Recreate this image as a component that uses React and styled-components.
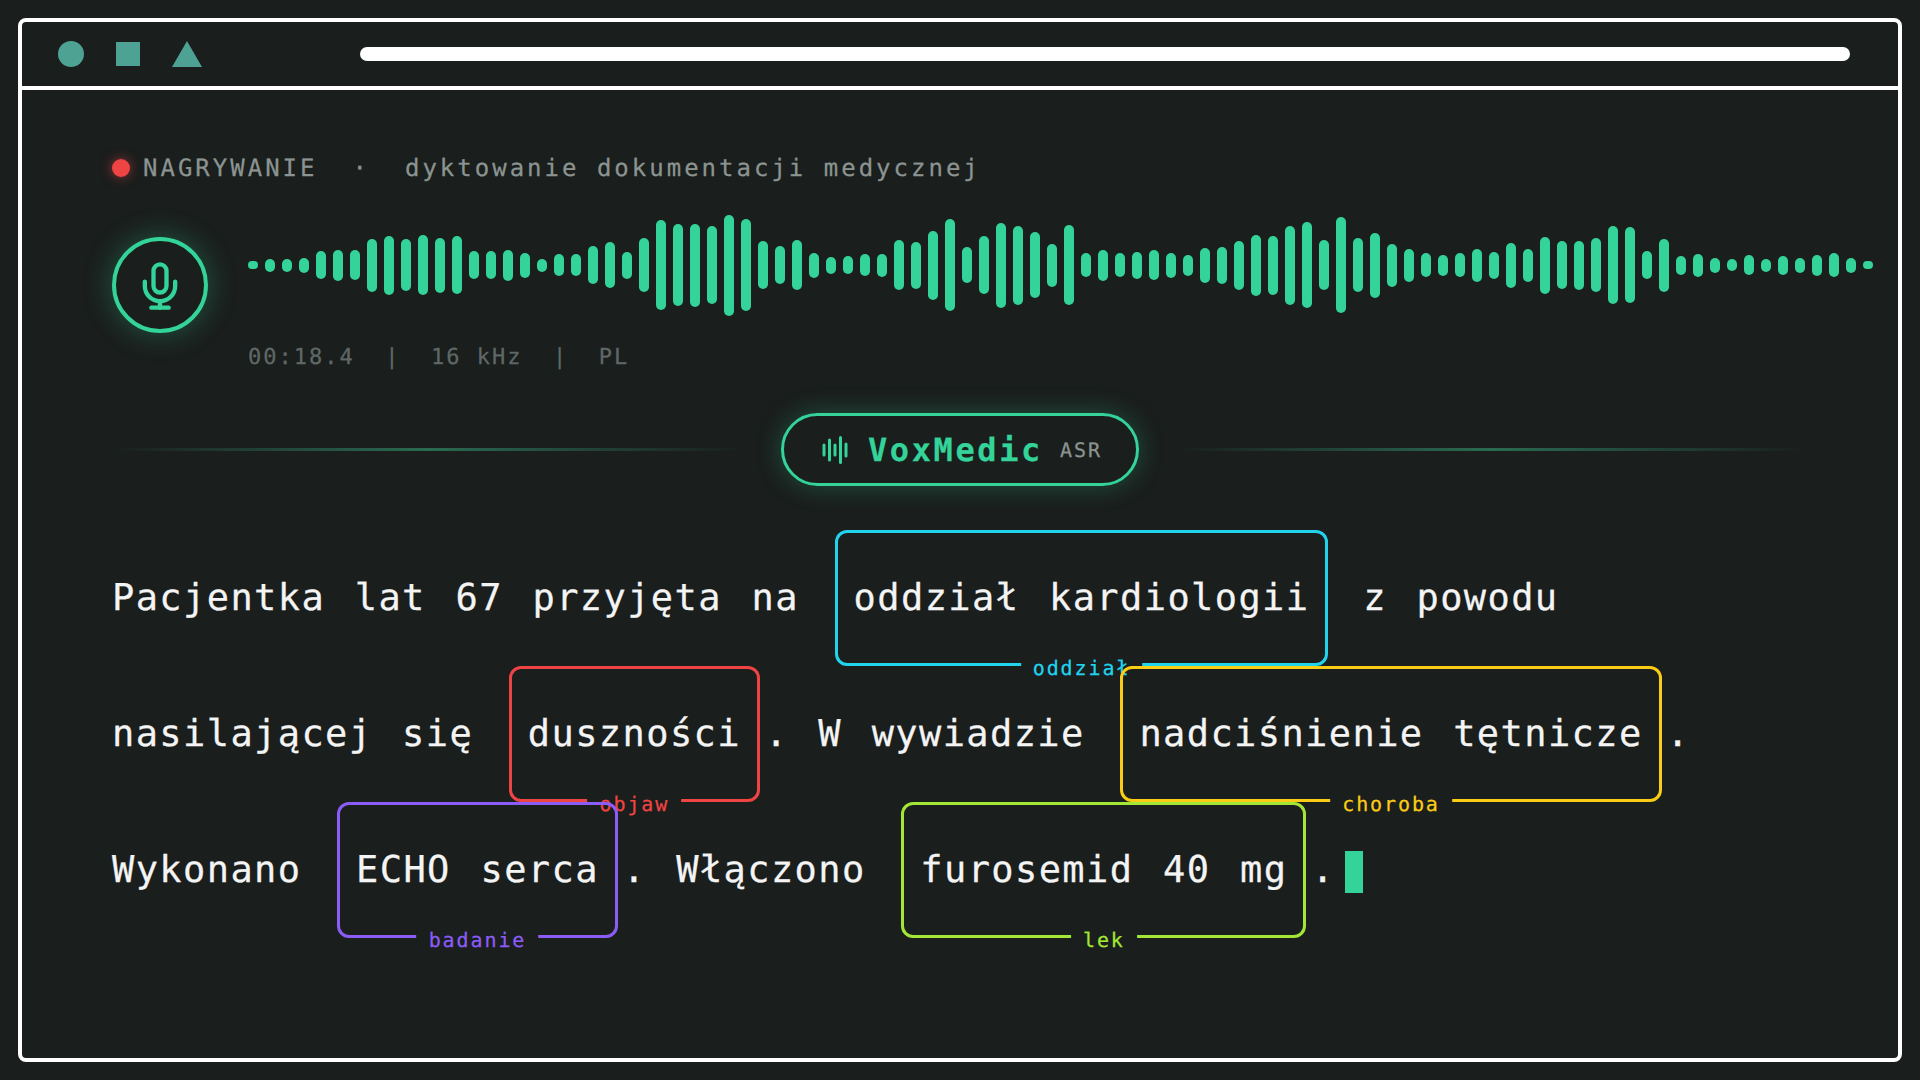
import styled, { createGlobalStyle } from "styled-components";

const GREEN = "#34d399";
const BG = "#1a1e1d";
const TEAL = "#4ea294";

const GlobalStyle = createGlobalStyle`
  html, body {
    margin: 0;
    background: ${BG};
  }
  * {
    box-sizing: border-box;
  }
`;

const Page = styled.div`
  width: 1920px;
  height: 1080px;
  padding: 18px;
  background: ${BG};
  font-family: "DejaVu Sans Mono", monospace;
  text-rendering: geometricPrecision;
  -webkit-text-stroke: 0.25px currentColor;
`;

const Frame = styled.div`
  height: 100%;
  border: 4px solid #fff;
  border-radius: 8px;
  overflow: hidden;
`;

const TitleBar = styled.div`
  height: 68px;
  border-bottom: 4px solid #fff;
  padding: 0 48px 0 36px;
  display: flex;
  align-items: center;
  gap: 32px;
`;

const Circle = styled.div`
  width: 26px;
  height: 26px;
  border-radius: 50%;
  background: ${TEAL};
`;

const Square = styled.div`
  width: 24px;
  height: 24px;
  background: ${TEAL};
`;

const Triangle = styled.div`
  width: 30px;
  height: 26px;
  background: ${TEAL};
  clip-path: polygon(50% 0, 100% 100%, 0 100%);
`;

const AddressBar = styled.div`
  flex: 1;
  height: 14px;
  margin-left: 126px;
  border-radius: 7px;
  background: #fff;
`;

const Main = styled.div`
  padding: 64px 25px 0 90px;
`;

const Status = styled.div`
  height: 28px;
  display: flex;
  align-items: center;
  gap: 35px;
  font-size: 24px;
  letter-spacing: 3px;
  color: #8b9491;
  white-space: pre;
`;

const Rec = styled.div`
  display: flex;
  align-items: center;
  gap: 13px;
`;

const RecDot = styled.div`
  width: 18px;
  height: 18px;
  border-radius: 50%;
  background: #ef4444;
  box-shadow: 0 0 12px rgba(239, 68, 68, 0.6);
`;

const Recorder = styled.div`
  margin-top: 33px;
  display: flex;
  align-items: flex-start;
  gap: 40px;
`;

const MicButton = styled.div`
  flex: none;
  width: 96px;
  height: 96px;
  margin-top: 22px;
  border: 4px solid ${GREEN};
  border-radius: 50%;
  display: flex;
  align-items: center;
  justify-content: center;
  box-shadow: 0 0 30px rgba(52, 211, 153, 0.32);
  svg {
    display: block;
    margin-top: 1px;
  }
`;

const Track = styled.div`
  flex: 1;
`;

const Wave = styled.div`
  height: 100px;
  display: flex;
  align-items: center;
  gap: 7px;
`;

const Bar = styled.div`
  flex: none;
  width: 10px;
  border-radius: 5px;
  background: ${GREEN};
`;

const Meta = styled.div`
  margin-top: 29px;
  height: 26px;
  display: flex;
  align-items: center;
  gap: 30.5px;
  font-size: 22px;
  letter-spacing: 2px;
  color: #5f6866;
`;

const BrandRow = styled.div`
  margin: 43px 0 44px 0;
  width: 1696px;
  display: flex;
  align-items: center;
  gap: 36px;
`;

const FadeLine = styled.div`
  flex: 1;
  height: 3px;
  background: linear-gradient(90deg, transparent, #2a6b52 50%, transparent);
`;

const Pill = styled.div`
  flex: none;
  width: 358px;
  height: 73px;
  border: 3px solid ${GREEN};
  border-radius: 37px;
  padding-left: 38px;
  display: flex;
  align-items: center;
  box-shadow: 0 0 26px rgba(52, 211, 153, 0.28);
`;

const BrandName = styled.span`
  margin-left: 20px;
  font-size: 32px;
  font-weight: bold;
  letter-spacing: 2.6px;
  color: ${GREEN};
`;

const BrandTag = styled.span`
  margin-left: 17px;
  font-size: 20px;
  letter-spacing: 2px;
  color: #8b9491;
`;

const Transcript = styled.div`
  font-size: 37px;
  letter-spacing: 1.4px;
  word-spacing: 6px;
  color: #f4f4f4;
`;

const Line = styled.div`
  height: 136px;
  padding-bottom: 2px;
  display: flex;
  align-items: center;
  white-space: pre;
`;

const Entity = styled.span`
  position: relative;
  align-self: flex-start;
  height: 136px;
  margin: 0 5px 0 6px;
  padding: 0 16px 2px;
  border: 3px solid ${(p) => p.$color};
  border-radius: 12px;
  display: flex;
  align-items: center;
`;

const EntityLabel = styled.span`
  position: absolute;
  left: 50%;
  bottom: -17px;
  transform: translateX(-50%);
  padding: 0 12px;
  background: ${BG};
  font-size: 20px;
  letter-spacing: 1.9px;
  word-spacing: 0;
  color: ${(p) => p.$color};
`;

const Cursor = styled.span`
  width: 18px;
  height: 42px;
  margin: 6px 0 0 10px;
  background: ${GREEN};
`;

const heights = [
  8, 13, 13, 15, 28, 31, 30, 53, 59, 52, 60, 55, 58, 28, 28, 31, 25, 13, 22, 22, 38, 46, 27, 54,
  90, 82, 83, 78, 101, 92, 48, 38, 50, 25, 17, 18, 22, 23, 50, 47, 69, 92, 36, 58, 85, 79, 66, 43,
  80, 24, 31, 24, 27, 30, 25, 21, 35, 37, 49, 61, 59, 79, 86, 50, 96, 54, 65, 43, 33, 24, 21, 24,
  33, 27, 45, 33, 57, 48, 49, 54, 78, 76, 28, 53, 19, 23, 15, 12, 20, 13, 19, 15, 21, 24, 15, 8,
];

const MicIcon = () => (
  <svg width="52" height="52" viewBox="0 0 24 24" fill="none" stroke={GREEN} strokeWidth="2" strokeLinecap="round">
    <rect x="9" y="2" width="6" height="13" rx="3" />
    <path d="M19 10v2a7 7 0 0 1-14 0v-2" />
    <path d="M12 19v3" />
    <path d="M8 22h8" />
  </svg>
);

const LogoIcon = () => (
  <svg width="26" height="28" viewBox="0 0 26 28" fill="none" stroke={GREEN} strokeWidth="3" strokeLinecap="round">
    <path d="M2 9v10" />
    <path d="M7.5 4v20" />
    <path d="M13 9v10" />
    <path d="M18.5 1.5v25" />
    <path d="M24 8v12" />
  </svg>
);

const Tag = ({ color, label, children }) => (
  <Entity $color={color}>
    {children}
    <EntityLabel $color={color}>{label}</EntityLabel>
  </Entity>
);

const App = () => {
  return (
    <Page>
      <GlobalStyle />
      <Frame>
        <TitleBar>
          <Circle />
          <Square />
          <Triangle />
          <AddressBar />
        </TitleBar>
        <Main>
          <Status>
            <Rec>
              <RecDot />
              <span>NAGRYWANIE</span>
            </Rec>
            <span>·</span>
            <span>dyktowanie dokumentacji medycznej</span>
          </Status>

          <Recorder>
            <MicButton>
              <MicIcon />
            </MicButton>
            <Track>
              <Wave>
                {heights.map((h, i) => (
                  <Bar key={i} style={{ height: h }} />
                ))}
              </Wave>
              <Meta>
                <span>00:18.4</span>
                <span>|</span>
                <span>16 kHz</span>
                <span>|</span>
                <span>PL</span>
              </Meta>
            </Track>
          </Recorder>

          <BrandRow>
            <FadeLine />
            <Pill>
              <LogoIcon />
              <BrandName>VoxMedic</BrandName>
              <BrandTag>ASR</BrandTag>
            </Pill>
            <FadeLine />
          </BrandRow>

          <Transcript>
            <Line>
              {"Pacjentka lat 67 przyjęta na "}
              <Tag color="#22d3ee" label="oddział">oddział kardiologii</Tag>
              {" z powodu"}
            </Line>
            <Line>
              {"nasilającej się "}
              <Tag color="#ef4444" label="objaw">duszności</Tag>
              {". W wywiadzie "}
              <Tag color="#facc15" label="choroba">nadciśnienie tętnicze</Tag>
              {"."}
            </Line>
            <Line>
              {"Wykonano "}
              <Tag color="#8b5cf6" label="badanie">ECHO serca</Tag>
              {". Włączono "}
              <Tag color="#a3e635" label="lek">furosemid 40 mg</Tag>
              {"."}
              <Cursor />
            </Line>
          </Transcript>
        </Main>
      </Frame>
    </Page>
  );
};

export default App;
